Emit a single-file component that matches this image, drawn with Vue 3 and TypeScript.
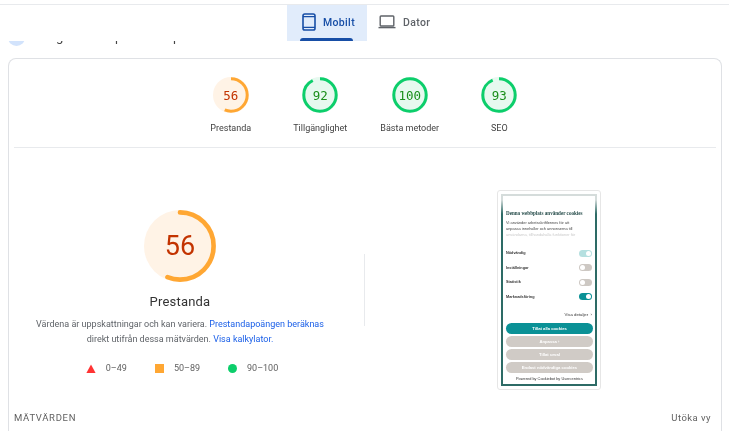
<script setup lang="ts">
interface Score { value: number; label: string }
const scores: Score[] = [
  { value: 56, label: 'Prestanda' },
  { value: 92, label: 'Tillgänglighet' },
  { value: 100, label: 'Bästa metoder' },
  { value: 93, label: 'SEO' },
]
const R = 16.2
const C = 2 * Math.PI * R
const dash = (v: number, c: number) => `${(v / 100) * c} ${c}`
const BIG_R = 33.6
const BIG_C = 2 * Math.PI * BIG_R
const toggles = [
  { name: 'Nödvändig', cls: 'on-light' },
  { name: 'Inställningar', cls: 'off' },
  { name: 'Statistik', cls: 'off' },
  { name: 'Marknadsföring', cls: 'on' },
]
const buttons = ['Tillåt alla cookies', 'Anpassa  ›', 'Tillåt urval', 'Endast nödvändiga cookies']
</script>

<template>
  <div class="page">
    <nav class="tabs">
      <div class="tab active">
        <svg class="tab-icon" width="14" height="18" viewBox="0 0 14 18" fill="none">
          <rect x="1" y="1" width="12" height="16" rx="1.8" stroke="#174ea6" stroke-width="1.6" />
          <path d="M1 3.6h12M1 14.4h12" stroke="#174ea6" stroke-width="1.2" />
        </svg>
        <span>Mobilt</span>
        <i class="underline"></i>
      </div>
      <div class="tab">
        <svg class="tab-icon" width="18" height="14" viewBox="0 0 18 14" fill="none">
          <rect x="2.2" y="1" width="13.6" height="10" rx="0.8" stroke="#5f6368" stroke-width="1.4" />
          <path d="M0.5 12.6h17" stroke="#5f6368" stroke-width="1.4" />
        </svg>
        <span>Dator</span>
      </div>
    </nav>

    <div class="clipped">
      <i class="dot"></i>
      <span class="clip-text g1">g</span>
      <span class="clip-text g2">p</span>
      <span class="clip-text g3">p</span>
    </div>

    <section class="card">
      <div class="summary">
        <div v-for="s in scores" :key="s.label" class="score">
          <div class="gauge" :class="s.value < 90 ? 'mid' : 'good'">
            <svg width="36" height="36" viewBox="0 0 36 36">
              <circle class="fill" cx="18" cy="18" r="18" />
              <circle class="arc" cx="18" cy="18" :r="R" stroke-width="3" :stroke-dasharray="dash(s.value, C)"
                transform="rotate(-90 18 18)" />
            </svg>
            <b>{{ s.value }}</b>
          </div>
          <span class="score-label">{{ s.label }}</span>
        </div>
      </div>

      <div class="detail">
        <div class="left">
          <div class="big-gauge">
            <svg width="72" height="72" viewBox="0 0 72 72">
              <circle cx="36" cy="36" r="36" fill="#fff3e6" />
              <circle cx="36" cy="36" :r="BIG_R" fill="none" stroke="#ffa733" stroke-width="4.6"
                stroke-linecap="round" :stroke-dasharray="dash(56, BIG_C)" transform="rotate(-90 36 36)" />
            </svg>
            <b>56</b>
          </div>
          <h2>Prestanda</h2>
          <p>
            Värdena är uppskattningar och kan variera. <a>Prestandapoängen beräknas</a><br />
            direkt utifrån dessa mätvärden. <a>Visa kalkylator.</a>
          </p>
          <div class="legend">
            <span class="item"><svg width="10" height="9" viewBox="0 0 10 9"><path d="M5 0.5 9.6 9H.4z" fill="#ff3333" /></svg>0–49</span>
            <span class="item"><i class="sq"></i>50–89</span>
            <span class="item"><i class="ci"></i>90–100</span>
          </div>
        </div>
        <div class="vline"></div>
        <div class="right">
          <div class="shot">
            <div class="phone">
              <div class="phone-body">
                <div class="ph-title">Denna webbplats använder cookies</div>
                <div class="ph-text">Vi använder arbetsskriftlennes för att</div>
                <div class="ph-text">anpassa innehåller och annonserna till</div>
                <div class="ph-text fade">användarna, tillhandahålla funktioner för</div>
                <div class="ph-toggles">
                  <div v-for="t in toggles" :key="t.name" class="ph-row">
                    <span>{{ t.name }}</span>
                    <i class="switch" :class="t.cls"></i>
                  </div>
                </div>
                <div class="ph-more">Visa detaljer &nbsp;›</div>
                <div class="ph-buttons">
                  <div v-for="(b, i) in buttons" :key="b" class="ph-btn" :class="{ primary: i === 0 }">{{ b }}</div>
                </div>
                <div class="ph-foot">Powered by Cookiebot by Usercentrics</div>
              </div>
            </div>
          </div>
        </div>
      </div>

      <div class="metrics">
        <span class="metrics-title">MÄTVÄRDEN</span>
        <span class="expand">Utöka vy</span>
      </div>
    </section>
  </div>
</template>

<style>
html, body { margin: 0; background: #fff; }
</style>

<style scoped>
.page {
  width: 729px;
  height: 431px;
  overflow: hidden;
  box-sizing: border-box;
  padding-top: 4px;
  font-family: Roboto, "Liberation Sans", sans-serif;
  background: #fff;
  color: #212121;
  filter: blur(0.25px);
}
.tabs {
  display: flex;
  height: 36px;
  padding-left: 287px;
  border-top: 1px solid #e8eaed;
  position: relative;
  z-index: 1;
  background: #fff;
}
.tab {
  position: relative;
  width: 80px;
  display: flex;
  align-items: center;
  gap: 7px;
  padding: 0 0 2px 15px;
  box-sizing: border-box;
  font-size: 10.5px;
  font-weight: 500;
  letter-spacing: 0.35px;
  color: #5f6368;
}
.tab + .tab { padding-left: 11px; gap: 7px; }
.tab.active { background: #e1ecfb; color: #174ea6; }
.tab-icon { flex: none; }
.underline {
  position: absolute;
  left: 13px;
  width: 53px;
  bottom: 0;
  height: 3px;
  background: #174ea6;
  border-radius: 3px 3px 0 0;
}
.clipped {
  position: relative;
  height: 5px;
  overflow: hidden;
}
.dot {
  position: absolute;
  left: 8px;
  top: -12px;
  width: 17px;
  height: 17px;
  border-radius: 50%;
  background: #d2e3fc;
}
.clip-text {
  position: absolute;
  top: -12px;
  font-size: 13px;
  line-height: 15px;
  color: #444;
}
.g1 { left: 56px; }
.g2 { left: 115px; }
.g3 { left: 173px; }
.card {
  margin: 12px 7px 0 8px;
  border: 1px solid #dfe1e5;
  border-bottom: none;
  border-radius: 8px 8px 0 0;
  padding: 0 5px;
  height: 400px;
}
.summary {
  display: flex;
  justify-content: flex-start;
  padding: 18px 0 13px 172px;
  border-bottom: 1px solid #e8eaed;
}
.score {
  width: 89.5px;
  display: flex;
  flex-direction: column;
  align-items: center;
}
.gauge {
  position: relative;
  width: 36px;
  height: 36px;
}
.gauge svg { display: block; }
.gauge b {
  position: absolute;
  inset: 0;
  display: flex;
  align-items: center;
  justify-content: center;
  font: 400 12.5px "DejaVu Sans Mono", "Liberation Mono", monospace;
}
.gauge .arc { fill: none; }
.mid .fill { fill: #fff3e6; }
.mid .arc { stroke: #ffa733; }
.mid b { color: #c33300; }
.good .fill { fill: #e6f9ef; }
.good .arc { stroke: #0cce6b; }
.good b { color: #1a8f1a; }
.score-label {
  margin-top: 9px;
  font-size: 9px;
  line-height: 12px;
  color: #424242;
  white-space: nowrap;
}
.detail {
  display: flex;
  align-items: flex-start;
  height: 264px;
}
.left {
  width: 332px;
  padding-top: 62px;
  display: flex;
  flex-direction: column;
  align-items: center;
}
.big-gauge {
  position: relative;
  width: 72px;
  height: 72px;
}
.big-gauge svg { display: block; }
.big-gauge b {
  position: absolute;
  inset: 0;
  display: flex;
  align-items: center;
  justify-content: center;
  font: 400 27px Roboto, sans-serif;
  color: #c33300;
}
h2 {
  margin: 10px 0 0;
  font-size: 13px;
  line-height: 20px;
  font-weight: 400;
  letter-spacing: 0.2px;
  color: #333;
}
p {
  margin: 5px 0 0;
  font-size: 9px;
  line-height: 15px;
  text-align: center;
  color: #5f6368;
  white-space: nowrap;
}
a { color: #1a5fe8; }
.legend {
  display: flex;
  margin-top: 15px;
  padding-left: 4px;
  gap: 28px;
  font-size: 9px;
  line-height: 12px;
  color: #616161;
}
.item { display: flex; align-items: center; gap: 10px; }
.sq { width: 9px; height: 9px; background: #ffa733; }
.ci { width: 9px; height: 9px; border-radius: 50%; background: #0cce6b; }
.vline {
  width: 1px;
  height: 72px;
  margin: 106px 0 0 18px;
  background: #e8eaed;
}
.right { flex: 1; display: flex; padding: 42px 0 0 132px; }
.shot {
  width: 104px;
  height: 200px;
  box-sizing: border-box;
  padding: 3px;
  border: 1px solid #e6e6e6;
  border-radius: 3px;
  background: #fff;
}
.phone {
  height: 100%;
  box-sizing: border-box;
  padding: 2px;
  background: linear-gradient(#d5dcdb 0, #d5dcdb 6px, #2d6b66 20px);
  overflow: hidden;
  font-family: "Liberation Sans", sans-serif;
  filter: blur(0.35px);
}
.phone-body {
  height: 100%;
  box-sizing: border-box;
  padding: 14px 2px 0 3px;
  color: #333;
  background: #fff;
}
.ph-title {
  font: 700 5.1px "Liberation Serif", serif;
  line-height: 7px;
  color: #274d4b;
  white-space: nowrap;
}
.ph-text {
  font-size: 3.9px;
  line-height: 6px;
  color: #444;
  white-space: nowrap;
}
.ph-title + .ph-text { margin-top: 3px; }
.ph-text.fade { opacity: 0.3; }
.ph-toggles { margin-top: 8px; }
.ph-row {
  display: flex;
  justify-content: space-between;
  align-items: center;
  height: 14.5px;
  font-size: 3.8px;
  font-weight: 700;
  color: #333;
}
.switch {
  position: relative;
  width: 13px;
  height: 7px;
  margin-right: 1px;
  border-radius: 4px;
}
.switch::after {
  content: "";
  position: absolute;
  top: 1px;
  width: 5px;
  height: 5px;
  border-radius: 50%;
  background: #fff;
}
.switch.on-light { background: #b5e0e0; }
.switch.on-light::after, .switch.on::after { right: 1px; }
.switch.off { background: #cdc8c3; }
.switch.off::after { left: 1px; }
.switch.on { background: #0a9196; }
.ph-more {
  margin-top: 8px;
  text-align: right;
  font-size: 4.3px;
  line-height: 6px;
  padding-right: 1px;
}
.ph-buttons {
  margin-top: 5px;
  display: flex;
  flex-direction: column;
  gap: 2px;
}
.ph-btn {
  height: 11px;
  border-radius: 6px;
  background: #d0cbc6;
  color: #fff;
  font-size: 4.2px;
  font-weight: 700;
  line-height: 11px;
  text-align: center;
}
.ph-btn.primary { background: #0a9196; }
.ph-foot {
  margin-top: 3px;
  font-size: 3.9px;
  line-height: 5px;
  text-align: center;
  white-space: nowrap;
}
.metrics {
  display: flex;
  justify-content: space-between;
  padding-right: 5px;
  font-size: 9.5px;
  line-height: 12px;
  color: #616161;
}
.metrics-title { letter-spacing: 0.7px; }
.expand { letter-spacing: 0.45px; }
</style>
